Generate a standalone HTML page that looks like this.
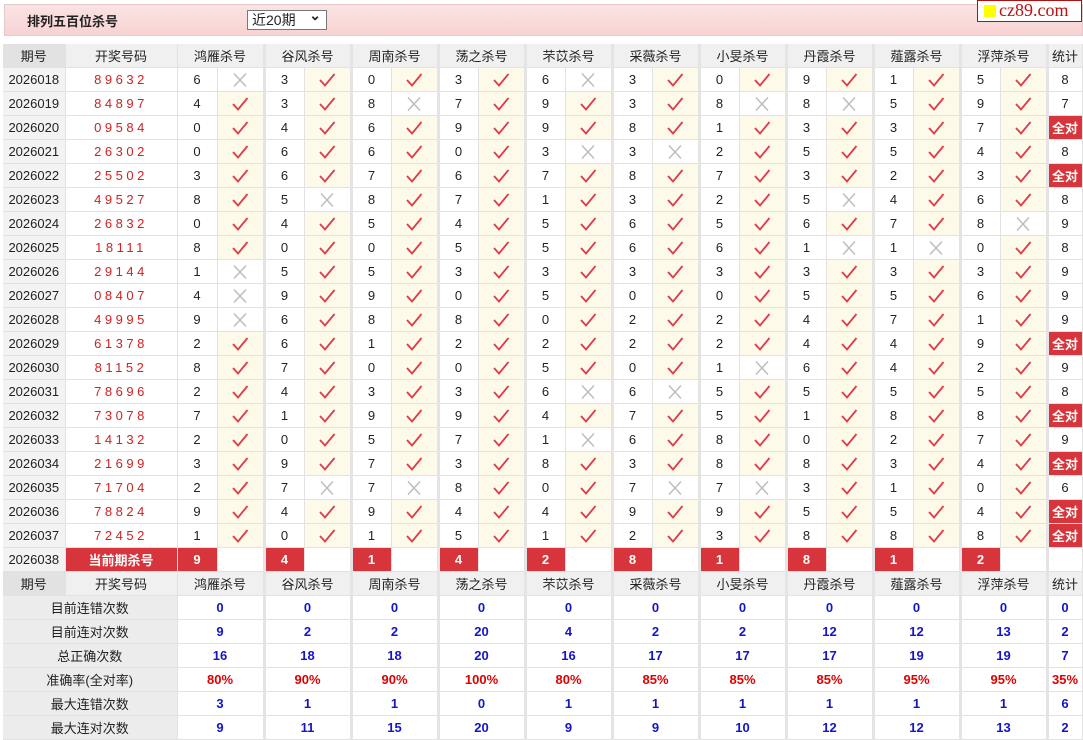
<!DOCTYPE html>
<html><head><meta charset="utf-8"><style>
body{margin:0;background:#fff;font-family:"Liberation Sans","Noto Sans CJK SC",sans-serif;font-size:13px;color:#222;width:1083px;height:740px;overflow:hidden;position:relative}
.top{position:absolute;left:4px;top:4px;width:1077px;height:30px;background:linear-gradient(#fbe3e3,#f7d3d3);border:1px solid #e4caca}
.title{position:absolute;left:22px;top:6px;font-weight:bold;font-size:13px}
.sel{position:absolute;left:242px;top:5px;width:74px;height:18px;border:1px solid #777;background:#fff;font-size:14px;line-height:18px;padding-left:4px}
.sel:after{content:"⌄";position:absolute;right:5px;top:-5px;font-weight:bold}
.logo{position:absolute;left:977px;top:0;width:103px;height:20px;background:#fff;border:1px solid #b01010}
.logo b{position:absolute;left:6px;top:4px;width:12px;height:12px;background:#ff0}
.logo span{position:absolute;left:21px;top:-1px;font-family:"Liberation Serif",serif;font-size:18px;color:#c01010}
table{position:absolute;left:3px;top:44px;border-collapse:collapse;table-layout:fixed}
td{height:23px;padding:0;text-align:center;border-bottom:1px solid #e2e2e2;border-right:1px solid #e2e2e2;white-space:nowrap}
td.m{border-right:3px solid #e4e4e4}
tr.h td{background:#f0f0f0}
tr.h td:first-child{background:#e2e2e2}
td.d{background:#f3f3f3}
td.n{color:#d42020;letter-spacing:3.5px}
td.v{background:#fdfaea}
svg{width:18px;height:16px;vertical-align:middle}
td.r{background:#d7353b;color:#fff;font-weight:bold}
td.l{background:#ececec}
td.b{color:#1515c8;font-weight:bold}
td.p{color:#e00000;font-weight:bold}
</style></head><body>
<svg style="display:none"><symbol id="c" viewBox="0 0 18 16"><path d="M2 8 L7 13.5 L16.5 2" fill="none" stroke="#e03a4a" stroke-width="1.8"/></symbol><symbol id="x" viewBox="0 0 18 16"><path d="M3 1.5 L15 14.5 M15 1.5 L3 14.5" fill="none" stroke="#bdbdbd" stroke-width="1.5"/></symbol></svg>
<div class="top"><div class="title">排列五百位杀号</div><div class="sel">近20期</div></div>
<div class="logo"><b></b><span>cz89.com</span></div>
<table>
<colgroup><col style="width:62px"><col style="width:112px"><col style="width:40px"><col style="width:47px"><col style="width:40px"><col style="width:47px"><col style="width:40px"><col style="width:47px"><col style="width:40px"><col style="width:47px"><col style="width:40px"><col style="width:47px"><col style="width:40px"><col style="width:47px"><col style="width:40px"><col style="width:47px"><col style="width:40px"><col style="width:47px"><col style="width:40px"><col style="width:47px"><col style="width:40px"><col style="width:47px"><col style="width:35px"></colgroup>
<tr class="h"><td>期号</td><td>开奖号码</td><td colspan="2" class="m">鸿雁杀号</td><td colspan="2" class="m">谷风杀号</td><td colspan="2" class="m">周南杀号</td><td colspan="2" class="m">荡之杀号</td><td colspan="2" class="m">芣苡杀号</td><td colspan="2" class="m">采薇杀号</td><td colspan="2" class="m">小旻杀号</td><td colspan="2" class="m">丹霞杀号</td><td colspan="2" class="m">薤露杀号</td><td colspan="2" class="m">浮萍杀号</td><td>统计</td></tr>
<tr><td class="d">2026018</td><td class="n">89632</td><td>6</td><td class="m"><svg><use href="#x"/></svg></td><td>3</td><td class="m v"><svg><use href="#c"/></svg></td><td>0</td><td class="m v"><svg><use href="#c"/></svg></td><td>3</td><td class="m v"><svg><use href="#c"/></svg></td><td>6</td><td class="m"><svg><use href="#x"/></svg></td><td>3</td><td class="m v"><svg><use href="#c"/></svg></td><td>0</td><td class="m v"><svg><use href="#c"/></svg></td><td>9</td><td class="m v"><svg><use href="#c"/></svg></td><td>1</td><td class="m v"><svg><use href="#c"/></svg></td><td>5</td><td class="m v"><svg><use href="#c"/></svg></td><td>8</td></tr>
<tr><td class="d">2026019</td><td class="n">84897</td><td>4</td><td class="m v"><svg><use href="#c"/></svg></td><td>3</td><td class="m v"><svg><use href="#c"/></svg></td><td>8</td><td class="m"><svg><use href="#x"/></svg></td><td>7</td><td class="m v"><svg><use href="#c"/></svg></td><td>9</td><td class="m v"><svg><use href="#c"/></svg></td><td>3</td><td class="m v"><svg><use href="#c"/></svg></td><td>8</td><td class="m"><svg><use href="#x"/></svg></td><td>8</td><td class="m"><svg><use href="#x"/></svg></td><td>5</td><td class="m v"><svg><use href="#c"/></svg></td><td>9</td><td class="m v"><svg><use href="#c"/></svg></td><td>7</td></tr>
<tr><td class="d">2026020</td><td class="n">09584</td><td>0</td><td class="m v"><svg><use href="#c"/></svg></td><td>4</td><td class="m v"><svg><use href="#c"/></svg></td><td>6</td><td class="m v"><svg><use href="#c"/></svg></td><td>9</td><td class="m v"><svg><use href="#c"/></svg></td><td>9</td><td class="m v"><svg><use href="#c"/></svg></td><td>8</td><td class="m v"><svg><use href="#c"/></svg></td><td>1</td><td class="m v"><svg><use href="#c"/></svg></td><td>3</td><td class="m v"><svg><use href="#c"/></svg></td><td>3</td><td class="m v"><svg><use href="#c"/></svg></td><td>7</td><td class="m v"><svg><use href="#c"/></svg></td><td class="r">全对</td></tr>
<tr><td class="d">2026021</td><td class="n">26302</td><td>0</td><td class="m v"><svg><use href="#c"/></svg></td><td>6</td><td class="m v"><svg><use href="#c"/></svg></td><td>6</td><td class="m v"><svg><use href="#c"/></svg></td><td>0</td><td class="m v"><svg><use href="#c"/></svg></td><td>3</td><td class="m"><svg><use href="#x"/></svg></td><td>3</td><td class="m"><svg><use href="#x"/></svg></td><td>2</td><td class="m v"><svg><use href="#c"/></svg></td><td>5</td><td class="m v"><svg><use href="#c"/></svg></td><td>5</td><td class="m v"><svg><use href="#c"/></svg></td><td>4</td><td class="m v"><svg><use href="#c"/></svg></td><td>8</td></tr>
<tr><td class="d">2026022</td><td class="n">25502</td><td>3</td><td class="m v"><svg><use href="#c"/></svg></td><td>6</td><td class="m v"><svg><use href="#c"/></svg></td><td>7</td><td class="m v"><svg><use href="#c"/></svg></td><td>6</td><td class="m v"><svg><use href="#c"/></svg></td><td>7</td><td class="m v"><svg><use href="#c"/></svg></td><td>8</td><td class="m v"><svg><use href="#c"/></svg></td><td>7</td><td class="m v"><svg><use href="#c"/></svg></td><td>3</td><td class="m v"><svg><use href="#c"/></svg></td><td>2</td><td class="m v"><svg><use href="#c"/></svg></td><td>3</td><td class="m v"><svg><use href="#c"/></svg></td><td class="r">全对</td></tr>
<tr><td class="d">2026023</td><td class="n">49527</td><td>8</td><td class="m v"><svg><use href="#c"/></svg></td><td>5</td><td class="m"><svg><use href="#x"/></svg></td><td>8</td><td class="m v"><svg><use href="#c"/></svg></td><td>7</td><td class="m v"><svg><use href="#c"/></svg></td><td>1</td><td class="m v"><svg><use href="#c"/></svg></td><td>3</td><td class="m v"><svg><use href="#c"/></svg></td><td>2</td><td class="m v"><svg><use href="#c"/></svg></td><td>5</td><td class="m"><svg><use href="#x"/></svg></td><td>4</td><td class="m v"><svg><use href="#c"/></svg></td><td>6</td><td class="m v"><svg><use href="#c"/></svg></td><td>8</td></tr>
<tr><td class="d">2026024</td><td class="n">26832</td><td>0</td><td class="m v"><svg><use href="#c"/></svg></td><td>4</td><td class="m v"><svg><use href="#c"/></svg></td><td>5</td><td class="m v"><svg><use href="#c"/></svg></td><td>4</td><td class="m v"><svg><use href="#c"/></svg></td><td>5</td><td class="m v"><svg><use href="#c"/></svg></td><td>6</td><td class="m v"><svg><use href="#c"/></svg></td><td>5</td><td class="m v"><svg><use href="#c"/></svg></td><td>6</td><td class="m v"><svg><use href="#c"/></svg></td><td>7</td><td class="m v"><svg><use href="#c"/></svg></td><td>8</td><td class="m"><svg><use href="#x"/></svg></td><td>9</td></tr>
<tr><td class="d">2026025</td><td class="n">18111</td><td>8</td><td class="m v"><svg><use href="#c"/></svg></td><td>0</td><td class="m v"><svg><use href="#c"/></svg></td><td>0</td><td class="m v"><svg><use href="#c"/></svg></td><td>5</td><td class="m v"><svg><use href="#c"/></svg></td><td>5</td><td class="m v"><svg><use href="#c"/></svg></td><td>6</td><td class="m v"><svg><use href="#c"/></svg></td><td>6</td><td class="m v"><svg><use href="#c"/></svg></td><td>1</td><td class="m"><svg><use href="#x"/></svg></td><td>1</td><td class="m"><svg><use href="#x"/></svg></td><td>0</td><td class="m v"><svg><use href="#c"/></svg></td><td>8</td></tr>
<tr><td class="d">2026026</td><td class="n">29144</td><td>1</td><td class="m"><svg><use href="#x"/></svg></td><td>5</td><td class="m v"><svg><use href="#c"/></svg></td><td>5</td><td class="m v"><svg><use href="#c"/></svg></td><td>3</td><td class="m v"><svg><use href="#c"/></svg></td><td>3</td><td class="m v"><svg><use href="#c"/></svg></td><td>3</td><td class="m v"><svg><use href="#c"/></svg></td><td>3</td><td class="m v"><svg><use href="#c"/></svg></td><td>3</td><td class="m v"><svg><use href="#c"/></svg></td><td>3</td><td class="m v"><svg><use href="#c"/></svg></td><td>3</td><td class="m v"><svg><use href="#c"/></svg></td><td>9</td></tr>
<tr><td class="d">2026027</td><td class="n">08407</td><td>4</td><td class="m"><svg><use href="#x"/></svg></td><td>9</td><td class="m v"><svg><use href="#c"/></svg></td><td>9</td><td class="m v"><svg><use href="#c"/></svg></td><td>0</td><td class="m v"><svg><use href="#c"/></svg></td><td>5</td><td class="m v"><svg><use href="#c"/></svg></td><td>0</td><td class="m v"><svg><use href="#c"/></svg></td><td>0</td><td class="m v"><svg><use href="#c"/></svg></td><td>5</td><td class="m v"><svg><use href="#c"/></svg></td><td>5</td><td class="m v"><svg><use href="#c"/></svg></td><td>6</td><td class="m v"><svg><use href="#c"/></svg></td><td>9</td></tr>
<tr><td class="d">2026028</td><td class="n">49995</td><td>9</td><td class="m"><svg><use href="#x"/></svg></td><td>6</td><td class="m v"><svg><use href="#c"/></svg></td><td>8</td><td class="m v"><svg><use href="#c"/></svg></td><td>8</td><td class="m v"><svg><use href="#c"/></svg></td><td>0</td><td class="m v"><svg><use href="#c"/></svg></td><td>2</td><td class="m v"><svg><use href="#c"/></svg></td><td>2</td><td class="m v"><svg><use href="#c"/></svg></td><td>4</td><td class="m v"><svg><use href="#c"/></svg></td><td>7</td><td class="m v"><svg><use href="#c"/></svg></td><td>1</td><td class="m v"><svg><use href="#c"/></svg></td><td>9</td></tr>
<tr><td class="d">2026029</td><td class="n">61378</td><td>2</td><td class="m v"><svg><use href="#c"/></svg></td><td>6</td><td class="m v"><svg><use href="#c"/></svg></td><td>1</td><td class="m v"><svg><use href="#c"/></svg></td><td>2</td><td class="m v"><svg><use href="#c"/></svg></td><td>2</td><td class="m v"><svg><use href="#c"/></svg></td><td>2</td><td class="m v"><svg><use href="#c"/></svg></td><td>2</td><td class="m v"><svg><use href="#c"/></svg></td><td>4</td><td class="m v"><svg><use href="#c"/></svg></td><td>4</td><td class="m v"><svg><use href="#c"/></svg></td><td>9</td><td class="m v"><svg><use href="#c"/></svg></td><td class="r">全对</td></tr>
<tr><td class="d">2026030</td><td class="n">81152</td><td>8</td><td class="m v"><svg><use href="#c"/></svg></td><td>7</td><td class="m v"><svg><use href="#c"/></svg></td><td>0</td><td class="m v"><svg><use href="#c"/></svg></td><td>0</td><td class="m v"><svg><use href="#c"/></svg></td><td>5</td><td class="m v"><svg><use href="#c"/></svg></td><td>0</td><td class="m v"><svg><use href="#c"/></svg></td><td>1</td><td class="m"><svg><use href="#x"/></svg></td><td>6</td><td class="m v"><svg><use href="#c"/></svg></td><td>4</td><td class="m v"><svg><use href="#c"/></svg></td><td>2</td><td class="m v"><svg><use href="#c"/></svg></td><td>9</td></tr>
<tr><td class="d">2026031</td><td class="n">78696</td><td>2</td><td class="m v"><svg><use href="#c"/></svg></td><td>4</td><td class="m v"><svg><use href="#c"/></svg></td><td>3</td><td class="m v"><svg><use href="#c"/></svg></td><td>3</td><td class="m v"><svg><use href="#c"/></svg></td><td>6</td><td class="m"><svg><use href="#x"/></svg></td><td>6</td><td class="m"><svg><use href="#x"/></svg></td><td>5</td><td class="m v"><svg><use href="#c"/></svg></td><td>5</td><td class="m v"><svg><use href="#c"/></svg></td><td>5</td><td class="m v"><svg><use href="#c"/></svg></td><td>5</td><td class="m v"><svg><use href="#c"/></svg></td><td>8</td></tr>
<tr><td class="d">2026032</td><td class="n">73078</td><td>7</td><td class="m v"><svg><use href="#c"/></svg></td><td>1</td><td class="m v"><svg><use href="#c"/></svg></td><td>9</td><td class="m v"><svg><use href="#c"/></svg></td><td>9</td><td class="m v"><svg><use href="#c"/></svg></td><td>4</td><td class="m v"><svg><use href="#c"/></svg></td><td>7</td><td class="m v"><svg><use href="#c"/></svg></td><td>5</td><td class="m v"><svg><use href="#c"/></svg></td><td>1</td><td class="m v"><svg><use href="#c"/></svg></td><td>8</td><td class="m v"><svg><use href="#c"/></svg></td><td>8</td><td class="m v"><svg><use href="#c"/></svg></td><td class="r">全对</td></tr>
<tr><td class="d">2026033</td><td class="n">14132</td><td>2</td><td class="m v"><svg><use href="#c"/></svg></td><td>0</td><td class="m v"><svg><use href="#c"/></svg></td><td>5</td><td class="m v"><svg><use href="#c"/></svg></td><td>7</td><td class="m v"><svg><use href="#c"/></svg></td><td>1</td><td class="m"><svg><use href="#x"/></svg></td><td>6</td><td class="m v"><svg><use href="#c"/></svg></td><td>8</td><td class="m v"><svg><use href="#c"/></svg></td><td>0</td><td class="m v"><svg><use href="#c"/></svg></td><td>2</td><td class="m v"><svg><use href="#c"/></svg></td><td>7</td><td class="m v"><svg><use href="#c"/></svg></td><td>9</td></tr>
<tr><td class="d">2026034</td><td class="n">21699</td><td>3</td><td class="m v"><svg><use href="#c"/></svg></td><td>9</td><td class="m v"><svg><use href="#c"/></svg></td><td>7</td><td class="m v"><svg><use href="#c"/></svg></td><td>3</td><td class="m v"><svg><use href="#c"/></svg></td><td>8</td><td class="m v"><svg><use href="#c"/></svg></td><td>3</td><td class="m v"><svg><use href="#c"/></svg></td><td>8</td><td class="m v"><svg><use href="#c"/></svg></td><td>8</td><td class="m v"><svg><use href="#c"/></svg></td><td>3</td><td class="m v"><svg><use href="#c"/></svg></td><td>4</td><td class="m v"><svg><use href="#c"/></svg></td><td class="r">全对</td></tr>
<tr><td class="d">2026035</td><td class="n">71704</td><td>2</td><td class="m v"><svg><use href="#c"/></svg></td><td>7</td><td class="m"><svg><use href="#x"/></svg></td><td>7</td><td class="m"><svg><use href="#x"/></svg></td><td>8</td><td class="m v"><svg><use href="#c"/></svg></td><td>0</td><td class="m v"><svg><use href="#c"/></svg></td><td>7</td><td class="m"><svg><use href="#x"/></svg></td><td>7</td><td class="m"><svg><use href="#x"/></svg></td><td>3</td><td class="m v"><svg><use href="#c"/></svg></td><td>1</td><td class="m v"><svg><use href="#c"/></svg></td><td>0</td><td class="m v"><svg><use href="#c"/></svg></td><td>6</td></tr>
<tr><td class="d">2026036</td><td class="n">78824</td><td>9</td><td class="m v"><svg><use href="#c"/></svg></td><td>4</td><td class="m v"><svg><use href="#c"/></svg></td><td>9</td><td class="m v"><svg><use href="#c"/></svg></td><td>4</td><td class="m v"><svg><use href="#c"/></svg></td><td>4</td><td class="m v"><svg><use href="#c"/></svg></td><td>9</td><td class="m v"><svg><use href="#c"/></svg></td><td>9</td><td class="m v"><svg><use href="#c"/></svg></td><td>5</td><td class="m v"><svg><use href="#c"/></svg></td><td>5</td><td class="m v"><svg><use href="#c"/></svg></td><td>4</td><td class="m v"><svg><use href="#c"/></svg></td><td class="r">全对</td></tr>
<tr><td class="d">2026037</td><td class="n">72452</td><td>1</td><td class="m v"><svg><use href="#c"/></svg></td><td>0</td><td class="m v"><svg><use href="#c"/></svg></td><td>1</td><td class="m v"><svg><use href="#c"/></svg></td><td>5</td><td class="m v"><svg><use href="#c"/></svg></td><td>1</td><td class="m v"><svg><use href="#c"/></svg></td><td>2</td><td class="m v"><svg><use href="#c"/></svg></td><td>3</td><td class="m v"><svg><use href="#c"/></svg></td><td>8</td><td class="m v"><svg><use href="#c"/></svg></td><td>8</td><td class="m v"><svg><use href="#c"/></svg></td><td>8</td><td class="m v"><svg><use href="#c"/></svg></td><td class="r">全对</td></tr>
<tr><td class="d">2026038</td><td class="r">当前期杀号</td><td class="r">9</td><td class="m"></td><td class="r">4</td><td class="m"></td><td class="r">1</td><td class="m"></td><td class="r">4</td><td class="m"></td><td class="r">2</td><td class="m"></td><td class="r">8</td><td class="m"></td><td class="r">1</td><td class="m"></td><td class="r">8</td><td class="m"></td><td class="r">1</td><td class="m"></td><td class="r">2</td><td class="m"></td><td></td></tr>
<tr class="h"><td>期号</td><td>开奖号码</td><td colspan="2" class="m">鸿雁杀号</td><td colspan="2" class="m">谷风杀号</td><td colspan="2" class="m">周南杀号</td><td colspan="2" class="m">荡之杀号</td><td colspan="2" class="m">芣苡杀号</td><td colspan="2" class="m">采薇杀号</td><td colspan="2" class="m">小旻杀号</td><td colspan="2" class="m">丹霞杀号</td><td colspan="2" class="m">薤露杀号</td><td colspan="2" class="m">浮萍杀号</td><td>统计</td></tr>
<tr><td colspan="2" class="l">目前连错次数</td><td colspan="2" class="m b">0</td><td colspan="2" class="m b">0</td><td colspan="2" class="m b">0</td><td colspan="2" class="m b">0</td><td colspan="2" class="m b">0</td><td colspan="2" class="m b">0</td><td colspan="2" class="m b">0</td><td colspan="2" class="m b">0</td><td colspan="2" class="m b">0</td><td colspan="2" class="m b">0</td><td class="b">0</td></tr>
<tr><td colspan="2" class="l">目前连对次数</td><td colspan="2" class="m b">9</td><td colspan="2" class="m b">2</td><td colspan="2" class="m b">2</td><td colspan="2" class="m b">20</td><td colspan="2" class="m b">4</td><td colspan="2" class="m b">2</td><td colspan="2" class="m b">2</td><td colspan="2" class="m b">12</td><td colspan="2" class="m b">12</td><td colspan="2" class="m b">13</td><td class="b">2</td></tr>
<tr><td colspan="2" class="l">总正确次数</td><td colspan="2" class="m b">16</td><td colspan="2" class="m b">18</td><td colspan="2" class="m b">18</td><td colspan="2" class="m b">20</td><td colspan="2" class="m b">16</td><td colspan="2" class="m b">17</td><td colspan="2" class="m b">17</td><td colspan="2" class="m b">17</td><td colspan="2" class="m b">19</td><td colspan="2" class="m b">19</td><td class="b">7</td></tr>
<tr><td colspan="2" class="l">准确率(全对率)</td><td colspan="2" class="m p">80%</td><td colspan="2" class="m p">90%</td><td colspan="2" class="m p">90%</td><td colspan="2" class="m p">100%</td><td colspan="2" class="m p">80%</td><td colspan="2" class="m p">85%</td><td colspan="2" class="m p">85%</td><td colspan="2" class="m p">85%</td><td colspan="2" class="m p">95%</td><td colspan="2" class="m p">95%</td><td class="p">35%</td></tr>
<tr><td colspan="2" class="l">最大连错次数</td><td colspan="2" class="m b">3</td><td colspan="2" class="m b">1</td><td colspan="2" class="m b">1</td><td colspan="2" class="m b">0</td><td colspan="2" class="m b">1</td><td colspan="2" class="m b">1</td><td colspan="2" class="m b">1</td><td colspan="2" class="m b">1</td><td colspan="2" class="m b">1</td><td colspan="2" class="m b">1</td><td class="b">6</td></tr>
<tr><td colspan="2" class="l">最大连对次数</td><td colspan="2" class="m b">9</td><td colspan="2" class="m b">11</td><td colspan="2" class="m b">15</td><td colspan="2" class="m b">20</td><td colspan="2" class="m b">9</td><td colspan="2" class="m b">9</td><td colspan="2" class="m b">10</td><td colspan="2" class="m b">12</td><td colspan="2" class="m b">12</td><td colspan="2" class="m b">13</td><td class="b">2</td></tr>
</table>
</body></html>
